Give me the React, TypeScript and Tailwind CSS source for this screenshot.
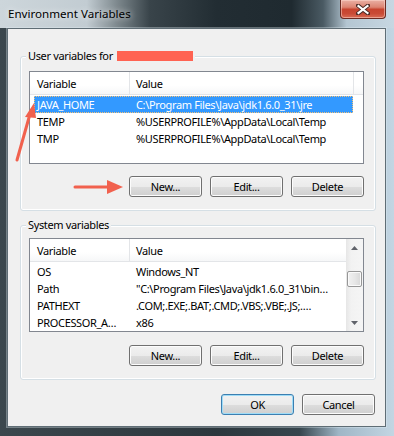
const font = "font-['Noto_Sans',sans-serif] text-[11px] tracking-[-0.35px] text-black";

type Row = { name: string; value: string; selected?: boolean };

const userRows: Row[] = [
  { name: "JAVA_HOME", value: "C:\\Program Files\\Java\\jdk1.6.0_31\\jre", selected: true },
  { name: "TEMP", value: "%USERPROFILE%\\AppData\\Local\\Temp" },
  { name: "TMP", value: "%USERPROFILE%\\AppData\\Local\\Temp" },
];

const systemRows: Row[] = [
  { name: "OS", value: "Windows_NT" },
  { name: "Path", value: "\"C:\\Program Files\\Java\\jdk1.6.0_31\\bin…" },
  { name: "PATHEXT", value: ".COM;.EXE;.BAT;.CMD;.VBS;.VBE;.JS;.…" },
  { name: "PROCESSOR_A…", value: "x86" },
];

const Button = ({ label, primary }: { label: string; primary?: boolean }) => (
  <button
    className={
      primary
        ? "w-[73px] h-[21px] rounded-[3px] border border-[#3c7fb1] shadow-[inset_0_0_0_1px_#9fdcf7] bg-[linear-gradient(180deg,#f2f2f2_0%,#ebebeb_50%,#dddddd_51%,#cfcfcf_100%)] leading-[19px] text-center"
        : "w-[73px] h-[21px] rounded-[3px] border border-[#707070] shadow-[inset_0_0_0_1px_#fcfcfc] bg-[linear-gradient(180deg,#f2f2f2_0%,#ebebeb_50%,#dddddd_51%,#cfcfcf_100%)] leading-[19px] text-center"
    }
  >
    {label}
  </button>
);

const ListRow = ({ row }: { row: Row }) => (
  <div
    className={
      row.selected
        ? "ml-[4px] w-[319px] h-[17px] flex items-center bg-[#3399ff] text-white outline outline-1 -outline-offset-1 outline-dotted outline-[#f3c27a]"
        : "ml-[4px] w-[319px] h-[17px] flex items-center"
    }
  >
    <div className="w-[96px] pl-[3px] whitespace-nowrap overflow-hidden leading-[17px]">{row.name}</div>
    <div className="flex-1 pl-[6px] whitespace-nowrap overflow-hidden leading-[17px]">{row.value}</div>
  </div>
);

const Header = ({ trailing }: { trailing?: boolean }) => (
  <div className="h-[23px] flex border-b border-[#e3e5e8] bg-[linear-gradient(180deg,#ffffff_0%,#ffffff_60%,#f6f7f8_100%)]">
    <div className="w-[100px] border-r border-[#e3e5e8] pl-[7px] leading-[23px]">Variable</div>
    <div
      className={
        trailing
          ? "w-[224px] border-r border-[#e3e5e8] pl-[6px] leading-[23px]"
          : "flex-1 pl-[6px] leading-[23px]"
      }
    >
      Value
    </div>
  </div>
);

const Scrollbar = () => (
  <div className="w-[17px] flex flex-col bg-[linear-gradient(90deg,#e6e6e6_0%,#f2f2f2_30%,#f5f5f5_100%)]">
    <div className="h-[17px] flex items-center justify-center">
      <svg width="7" height="4" viewBox="0 0 7 4">
        <path d="M3.5 0 L7 4 L0 4 Z" fill="#60636a" />
      </svg>
    </div>
    <div className="h-[15px]" />
    <div className="mx-[1px] h-[16px] rounded-[2px] border border-[#979797] shadow-[inset_0_0_0_1px_#fafafa] bg-[linear-gradient(90deg,#f1f1f1_0%,#e7e7e7_50%,#d8d8d8_100%)]" />
    <div className="flex-1" />
    <div className="h-[17px] flex items-center justify-center">
      <svg width="7" height="4" viewBox="0 0 7 4">
        <path d="M0 0 L7 0 L3.5 4 Z" fill="#60636a" />
      </svg>
    </div>
  </div>
);

const Group = ({
  label,
  redacted,
  children,
}: {
  label: string;
  redacted?: boolean;
  children: React.ReactNode;
}) => (
  <div className="relative ml-[12px] w-[356px] h-[155px] rounded-[3px] border border-[#d5dfe5] shadow-[inset_0_0_0_1px_#ffffff] pl-[8px] pr-[10px]">
    <div className="absolute -top-[9px] left-[5px] flex items-center bg-[#f0f0f0] px-[2px] leading-[16px]">
      <span>{label}</span>
      {redacted && <span className="ml-[4px] inline-block w-[76px] h-[10px] bg-[#ff6352]" />}
    </div>
    {children}
  </div>
);

const App = () => {
  return (
    <div className={`${font} relative w-[394px] h-[436px] overflow-hidden flex flex-col bg-[linear-gradient(90deg,#3b474d_0%,#2c373d_55%,#36454d_76%,#9fb6c6_86%,#c3d6e3_100%)]`}>
      {/* Title bar */}
      <div className="h-[28px] flex justify-between bg-[linear-gradient(90deg,#cdd6db_0%,#c2ccd2_22%,#7b868b_30%,#39444a_38%,#222d33_55%,#1f2a30_74%,#4a5a63_82%,#b4c6d2_88%,#c7d7e2_100%)]">
        <div className="pl-[8px] pt-[6px] text-[11.6px] tracking-normal leading-[16px] [text-shadow:0_0_6px_#ffffff]">
          Environment Variables
        </div>
        <div className="mr-[8px] w-[46px] h-[19px] rounded-b-[4px] border border-t-0 border-[#6b2a22] shadow-[inset_0_0_0_1px_rgba(255,220,210,0.5)] bg-[linear-gradient(180deg,#eab0a4_0%,#dc8472_40%,#c7442f_52%,#c94a35_75%,#d86c55_100%)] flex items-center justify-center">
          <svg width="14" height="11" viewBox="0 0 14 11">
            <path d="M2 1.5 L12 9.5 M12 1.5 L2 9.5" stroke="#4a2a26" strokeWidth="4" strokeLinecap="square" />
            <path d="M2.5 2 L11.5 9 M11.5 2 L2.5 9" stroke="#ffffff" strokeWidth="2.2" strokeLinecap="square" />
          </svg>
        </div>
      </div>

      {/* Client area */}
      <div className="flex-1 flex pl-[7px] pr-[8px] pb-[9px]">
        <div className="flex-1 border border-[#5f6d75] bg-[#f0f0f0] shadow-[0_0_0_1px_rgba(230,240,246,0.35)] flex flex-col">
          <div className="h-[27px]" />
          <Group label="User variables for" redacted>
            <div className="mt-[14px] w-[335px] h-[93px] border border-[#828790] bg-white overflow-hidden">
              <Header trailing />
              <div className="pt-[1px]">
                {userRows.map((r) => (
                  <ListRow key={r.name} row={r} />
                ))}
              </div>
            </div>
            <div className="mt-[12px] flex justify-end gap-[8px] w-[335px]">
              <Button label="New..." />
              <Button label="Edit..." />
              <Button label="Delete" />
            </div>
          </Group>

          <div className="h-[14px]" />

          <Group label="System variables">
            <div className="mt-[12px] w-[335px] h-[94px] border border-[#828790] bg-white overflow-hidden flex">
              <div className="flex-1 overflow-hidden">
                <Header />
                <div className="pt-[1px]">
                  {systemRows.map((r) => (
                    <ListRow key={r.name} row={r} />
                  ))}
                </div>
              </div>
              <Scrollbar />
            </div>
            <div className="mt-[13px] flex justify-end gap-[8px] w-[335px]">
              <Button label="New..." />
              <Button label="Edit..." />
              <Button label="Delete" />
            </div>
          </Group>

          <div className="mt-[14px] ml-[213px] flex gap-[8px]">
            <Button label="OK" primary />
            <Button label="Cancel" />
          </div>
        </div>
      </div>

      {/* Annotation arrows */}
      <svg className="absolute left-0 top-0 pointer-events-none" width="394" height="436" viewBox="0 0 394 436">
        <line x1="17" y1="160" x2="30" y2="114" stroke="#f1614e" strokeWidth="3" strokeLinecap="round" />
        <path d="M34 103 L25 117 L36 118 Z" fill="#f1614e" />
        <line x1="75" y1="187" x2="110" y2="187" stroke="#f1614e" strokeWidth="3" strokeLinecap="round" />
        <path d="M123 187 L107 180 L107 194 Z" fill="#f1614e" />
      </svg>
    </div>
  );
};

export default App;
